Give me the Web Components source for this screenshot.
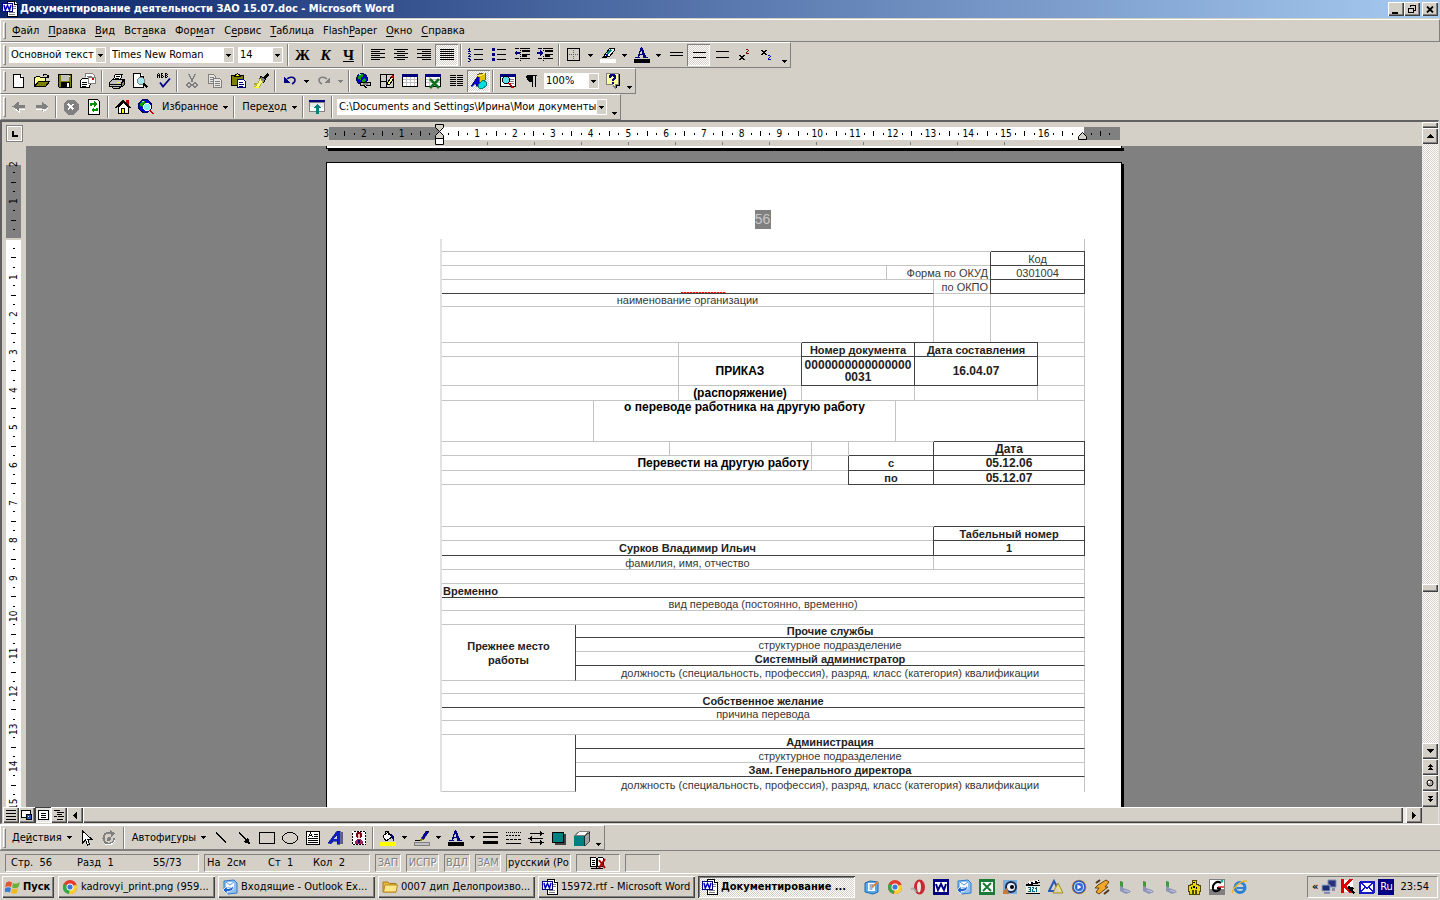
<!DOCTYPE html>
<html lang="ru">
<head>
<meta charset="utf-8">
<title>Документирование деятельности ЗАО 15.07.doc - Microsoft Word</title>
<style>
html,body{margin:0;height:100%}
body{font:11px/14px "DejaVu Sans Condensed","DejaVu Sans",sans-serif;color:#000;background:#d4d0c8;overflow:hidden}
</style>
</head>
<body>
<word-app></word-app>
<script>
const BASE = `
*{box-sizing:border-box}
button{font:inherit;color:inherit;background:none;border:0;padding:0;margin:0;white-space:nowrap}
svg{display:block;flex:none}
.raised{background:#d4d0c8;box-shadow:inset 1px 1px #fff,inset -1px -1px #404040,inset -2px -2px #808080}
`;
function define(name, render) {
  customElements.define(name, class extends HTMLElement {
    constructor() { super(); this.attachShadow({ mode: 'open' }); }
    connectedCallback() { this.shadowRoot.innerHTML = '<style>' + BASE + '</style>' + render(this); }
  });
}

/* ---------- icons ---------- */
const K = '#000', N = '#000080', G = '#808080', W = '#fff', T = '#008080', Y = '#ffff00', O = '#808000', S = '#c0c0c0';
const r = (x, y, w, h, c) => `<rect x="${x}" y="${y}" width="${w}" height="${h}" fill="${c}"/>`;
const p = (d, f = 'none', s = 'none', w = 1) => `<path d="${d}" fill="${f}" stroke="${s}" stroke-width="${w}"/>`;
const c = (x, y, q, f, s = 'none', w = 1) => `<circle cx="${x}" cy="${y}" r="${q}" fill="${f}" stroke="${s}" stroke-width="${w}"/>`;
const rows = (list, col = K) => list.map(([x, y, w]) => r(x, y, w, 1, col)).join('');
const soft = s => `<g shape-rendering="auto">${s}</g>`;
const map = (lines, pal, ox = 0, oy = 0) => lines.map((l, y) => [...l].map((ch, x) => pal[ch] ? r(x + ox, y + oy, 1, 1, pal[ch]) : '').join('')).join('');
const wordMark = p('M5.5 .5h7l3 3v12h-10z', W, K) + p('M12.5 .5v3h3', W, K) + r(7, 11, 6, 1, G) + r(7, 13, 6, 1, G) + r(11, 5, 3, 1, G) + r(11, 7, 3, 1, G) + r(0, 2, 11, 9, N) + r(1, 3, 9, 7, W) + soft(p('M2 4l1.3 5L5.500 4.500l2 4.500L9 4', 'none', '#0000c0', 1.500));
const globe = (x, y, q) => c(x, y, q, '#0000d0', '#000060') + p(`M${x - q + 1} ${y - 1}l2-3 3-1 1 2-3 2v2zM${x} ${y + 1}l3-2 1 2-2 3-2 0z`, '#00a000') + p(`M${x - 3} ${y - 4}l2-1`, 'none', '#a0e8ff');
const digits = map(['.n.', 'nn.', '.n.', 'nnn', '...', 'nn.', '..n', '.n.', 'nnn', '...', 'nn.', '.nn', '..n', 'nn.'], { n: N }, 0, 1);
const leg = soft(p('M3 2l3 1v6l6 2 2 2-5 2-6-3z', '#8f94b8') + p('M3 2l3 1v5l-3-1z', '#3f9a3a') + p('M7 11l5 1v1l-5-1z', '#c6c9de'));
const chrome = soft(c(8, 8, 7, '#e33b2e') + p('M8 8L1.800 4.800A7 7 0 0 0 7 15z', '#3aa64a') + p('M8 8l6.500-2.500A7 7 0 0 1 7 15z', '#f8d030') + c(8, 8, 3.500, W) + c(8, 8, 2.600, '#3a78d8'));
const outlook = soft(p('M2 2l10-1 3 3v10l-9 1-4-3z', '#8fc0f4', '#2f77c8') + p('M4 3h8v5H4z', '#f4faff') + p('M4 3l4 3 4-3', 'none', '#5a98d8') + p('M1 11l4-4v2.500c4 0 5-1 6-3 1 4-1 6-6 6V15z', '#1f62cc', '#fff', .8));
const ICONS = {
  word: wordMark,
  alignL: rows([[1, 2, 14], [1, 4, 9], [1, 6, 14], [1, 8, 9], [1, 10, 14], [1, 12, 9]]),
  alignC: rows([[1, 2, 14], [4, 4, 8], [1, 6, 14], [4, 8, 8], [1, 10, 14], [4, 12, 8]]),
  alignR: rows([[1, 2, 14], [6, 4, 9], [1, 6, 14], [6, 8, 9], [1, 10, 14], [6, 12, 9]]),
  alignJ: rows([[1, 2, 14], [1, 4, 14], [1, 6, 14], [1, 8, 14], [1, 10, 14], [1, 12, 14]]),
  numList: digits + rows([[6, 2, 9], [6, 7, 9], [6, 12, 9]]),
  bulList: r(1, 1, 3, 3, N) + r(1, 6, 3, 3, N) + r(1, 11, 3, 3, N) + rows([[6, 2, 9], [6, 7, 9], [6, 12, 9]]),
  outdent: rows([[1, 1, 4], [7, 1, 9], [8, 7, 8], [1, 11, 4], [7, 11, 9]]) + r(8, 3, 8, 2, K) + r(8, 8, 5, 2, K) + r(6, 1, 1, 1, K) + r(6, 3, 1, 1, K) + r(6, 5, 1, 1, K) + r(6, 7, 1, 1, K) + r(6, 9, 1, 1, K) + r(6, 11, 1, 1, K) + r(6, 13, 1, 1, K) + p('M0 6l3-3v2h3v2H3v2z', N),
  indent: rows([[1, 1, 4], [7, 1, 9], [8, 7, 8], [1, 11, 4], [7, 11, 9]]) + r(8, 3, 8, 2, K) + r(8, 8, 5, 2, K) + r(6, 1, 1, 1, K) + r(6, 3, 1, 1, K) + r(6, 9, 1, 1, K) + r(6, 11, 1, 1, K) + r(6, 13, 1, 1, K) + p('M6 6L3 3v2H0v2h3v2z', N),
  border: p('M1.500 1.500h12v12h-12z', 'none', K) + `<path d="M7.500 3v10M3 7.500h10" stroke="#606060" stroke-dasharray="1 1"/>`,
  marker: p('M4 9l5-7 2-1h3v3l-5 6z', W, K) + p('M7 7l4-4', 'none', T, 2) + r(6, 7, 2, 2, '#0000c0') + p('M1 11l3-3 3 2-1 1z', K) + r(0, 12, 16, 4, W),
  fontColor: p('M3 11L7 0h1l5 11h-3l-1-3H6l-1 3zM6 7h2.500L7.200 3z', N) + r(1, 10, 5, 1, N) + r(9, 10, 5, 1, N) + r(0, 12, 16, 4, K),
  sp1: rows([[2, 5, 13], [2, 8, 13]]),
  sp15: rows([[2, 5, 13], [2, 10, 13]]),
  sp2: rows([[2, 4, 13], [2, 10, 13]]),
  sup: map(['kk..kk', '.kkkk.', '..kk..', '.kkkk.', 'kk..kk'], { k: K }, 2, 8) + map(['nn.', '..n', '.n.', 'n..', 'nnn'], { n: '#800000' }, 9, 2),
  sub: map(['kk..kk', '.kkkk.', '..kk..', '.kkkk.', 'kk..kk'], { k: K }, 1, 3) + map(['nn.', '..n', '.n.', 'n..', 'nnn'], { n: '#0000c0' }, 8, 8),
  newDoc: p('M2.500 1.500h7l3 3v10h-10z', W, K) + p('M9.500 1.500v3h3', W, K),
  open: p('M.5 12.500v-8h1l1-1h3l1 1h5v3', '#ffff90', K) + p('M.5 13.500l4-5h11l-4 5z', O, K) + p('M9 2.500c2-2 4-1 5 1m0-2v3h-3', 'none', K),
  save: p('M1.500 1.500h13v13h-12l-1-1z', O, K) + r(4, 2, 8, 6, S) + r(4, 9, 9, 5, K) + r(10, 10, 2, 4, W) + r(12, 3, 1, 1, W),
  mail: p('M5.500 4V.5h7l2 2v7h-3', W, G) + rows([[7, 3, 5], [7, 5, 5]], G) + p('M.5 7.500l2-2h9v5l-2 2v2h-9z', W, K) + p('M8.500 4.500h7v6h-7z', W, G) + r(12, 5, 2, 2, '#e00000') + rows([[2, 9, 5], [2, 11, 5], [2, 13, 4]], K),
  print: p('M4.500 6l2-5h7l-2 5', W, K) + rows([[7, 3, 4], [6, 5, 4]], K) + p('M.5 9.500l3-3h11l-2 4v3h-12z', S, K) + p('M12.500 10.500l3-4v5l-3 3', G, K) + r(1, 11, 11, 1, K) + r(8, 9, 3, 1, Y) + p('M2.500 13.500h9l-1 2h-6z', S, K),
  preview: p('M1.500 .5h7l3 3v11h-10z', W, K) + p('M8.500 .5v3h3', W, K) + c(9, 8, 3.500, '#a0e8f0', G) + p('M11.500 10.500l4 4', 'none', K, 2),
  spell: map(['.k..kk..kk.', 'k.k.k...k.k', 'kkk.kk..kk.', 'k.k.k.k.k.k', 'k.k.kk..kk.'], { k: K }, 2, 0) + soft(p('M5 9.500l3 4 7-8', 'none', N, 1.800)),
  cut: p('M5 1l3.500 8M11 1L7.500 9', 'none', G, 1.500) + c(5, 12, 2, 'none', G, 1.500) + c(11, 12, 2, 'none', G, 1.500),
  copy: p('M1.500 1.500h5l2 2v7h-7z', '#e8e6e0', G) + rows([[3, 4, 4], [3, 6, 4], [3, 8, 4]], G) + p('M6.500 5.500h6l2 2v7h-8z', '#e8e6e0', G) + rows([[8, 8, 5], [8, 10, 5], [8, 12, 5]], G),
  paste: p('M1.500 2.500h12v10h-12z', O, K) + p('M4.500 3.500l1-2h1l1-1 1 1h1l1 2z', Y, K) + p('M7.500 6.500h6l2 2v6h-8z', W, N) + rows([[9, 9, 4], [9, 11, 5], [9, 13, 4]], N),
  brush: p('M11 4l3-4 2 2-4 4z', K) + p('M10.500 4.500l-3-1 -1 3 4 3 2-3z', G, K) + p('M7 5l3 4-5 6-4-1 3-2-3-1 4-1z', '#ffff80', O, .6) + r(1, 14, 5, 1, Y),
  undo: soft(p('M5 6c3-3 8-2 8 1 0 2-1 3-3 4', 'none', N, 1.500)) + p('M2 4v6h6z', N),
  redo: soft(p('M11 6C8 3 3 4 3 7c0 2 1 3 3 4', 'none', G, 1.500)) + p('M14 4v6H8z', G),
  link: globe(6, 6, 5.500) + p('M4.500 9.500h4v3h-4zM10.500 9.500h4v3h-4z', S, K, 1.500) + r(7, 10, 5, 2, G) + p('M8 13l3 2', 'none', K),
  tables: p('M1.500 1.500h13v13h-13zM7.500 1.500v13M1.500 8.500h6', 'none', K) + p('M8 12l1-3 4-6 2 2-4 6z', '#ffff80', K) + p('M13 3l2 2', 'none', '#c00000', 1.500),
  table: r(0, 1, 16, 13, K) + r(0, 1, 16, 3, N) + r(1, 4, 14, 9, W) + rows([[1, 6, 14], [1, 9, 14]], S) + r(4, 4, 1, 9, S) + r(8, 4, 1, 9, S) + r(12, 4, 1, 9, S),
  excel: r(0, 1, 16, 13, K) + r(0, 1, 16, 3, N) + r(1, 4, 14, 9, W) + rows([[1, 6, 14], [1, 9, 14]], S) + r(4, 4, 1, 9, S) + soft(p('M5 6l9 9M14 6l-9 9', 'none', '#107020', 2.500)),
  cols: [2, 4, 6, 8, 10, 12].map(y => r(2, y, 6, 1, K) + r(9, y, 6, 1, K)).join(''),
  draw: p('M6 2l3-2h5v7l-2 2H6z', '#e0c000', K, .6) + p('M6 2h5l3-2', 'none', '#fff080') + p('M0 13L6 4h2v9H5l0-2H3l-1 2z', '#0000d0', '#000060', .5) + p('M7 12l5-5 3 2v4l-4 3-3-1z', '#00e0e0', T),
  docmap: r(0, 1, 16, 13, K) + r(0, 1, 16, 3, N) + r(1, 4, 14, 9, W) + rows([[9, 6, 5], [10, 8, 4], [10, 10, 4]], G) + c(6, 7, 3.500, '#60e0e8', K) + p('M9 10l4 5', 'none', '#c00000', 2),
  para: p('M4 2h10v1h-1v11h-1V3h-2v11H9V9H6L4 7V6L3 4z', K),
  help: p('M1.500 .5h12v11h-3v4l-3-4h-6z', '#ffffa0', G) + p('M14.500 1v11h-3v3', 'none', K) + p('M5 4.500V3h1V2h3v1h1v2L8 6.500V8', 'none', N, 2) + r(7, 9, 2, 2, N),
  back: p('M1.500 7.500l6-5v3.500h6v3h-6v3.500z', G) + p('M3 9l5 4v-3h6', 'none', W),
  fwd: p('M14 7.500l-6-5v3.500H2v3h6v3.500z', G) + p('M14 9l-5 4v-3H2', 'none', W),
  stop: p('M5 .5h6l4.500 4.500v6L11 15.500H5L.5 11V5z', G) + p('M5 5l5.500 5.500M10.500 5L5 10.500', 'none', W, 2),
  refresh: p('M2.500 .5h9l2 2v13h-11z', W, K) + p('M5 7V5h4', 'none', '#009000', 1.500) + p('M8 2l3 3-3 3z', '#009000') + p('M11 8.500v2.500H7', 'none', '#009000', 1.500) + p('M8 8l-3 3 3 3z', '#009000'),
  home: r(11, 1, 3, 5, '#c00000') + p('M3.500 8v6.500h10V8l-5-5z', W, K) + p('M.5 9L8 1.500 15.500 9', 'none', K, 1.500) + r(6, 9, 4, 5, Y) + p('M6.500 14V9.500h3V14', 'none', K),
  search: globe(7, 7, 6.500) + c(9, 8, 3.500, '#80f0ff', W) + p('M11.500 11l4 4', 'none', '#d00000', 2),
  barsTop: r(0, 1, 16, 3, N) + p('M.5 3.500h15v9h-15z', W, G) + r(1, 4, 14, 4, '#e8e8e8') + p('M8 5l4 4H9.500v6h-3V9H4z', T),
  pick: p('M4.500 1v12l3-3 2 5 2-1-2-5h4z', W, K),
  rotate: p('M11 3.500A5.500 5.500 0 1 0 13.500 8', 'none', G, 2) + p('M9 0l5 3-4 4z', G) + c(8, 9, 2, G) + p('M4 14c4 2 9 0 10-4', 'none', W),
  line: p('M3 2.500l10 10', 'none', K),
  arrow: p('M3 2.500l8 8', 'none', K) + p('M14 14l-2-7-5 5z', K),
  rect: p('M.5 2.500h15v11h-15z', 'none', K),
  oval: `<ellipse cx="8" cy="8" rx="7.500" ry="5.500" fill="none" stroke="#000"/>`,
  textbox: r(1, 1, 14, 14, K) + r(2, 2, 12, 12, W) + p('M3.500 7l2-4 2 4M4 5.500h3', 'none', K) + rows([[9, 4, 4], [9, 6, 4], [3, 8, 10], [3, 10, 10], [3, 12, 10]]),
  wordart: p('M0 13L9 1h3v13H9v-3H5l-2 3z', '#1020c8', '#000060', .5) + p('M6 9h3V5z', '#d4d0c8') + r(13, 2, 2, 12, '#606080'),
  clip: p('M1.500 1.500h13v13h-13z', W, K) + `<path d="M1.500 1.500h13v13h-13z" fill="none" stroke="#fff" stroke-dasharray="1 2"/>` + c(8, 5, 3, '#800020') + r(7, 4, 2, 4, '#f0c090') + p('M4 14c0-7 8-7 8 0z', '#a02060') + r(7, 10, 2, 3, N),
  fill: p('M3 6l5-4 4 5-6 4z', W, K) + p('M5 5V1h3v4', 'none', K) + p('M11 4c4 1 3 5 3 7-2-1-1-3-3-4z', N) + r(0, 12, 16, 4, Y),
  pen: p('M7 9l5-8 3 0-1 2-5 7z', '#0000c0', K, .6) + p('M5 10l3-2 1 2-3 1z', O) + r(1, 10, 5, 1, K) + p('M.5 12.500h15v3H.5z', S, G),
  weights: r(1, 2, 15, 1, K) + r(1, 6, 15, 2, K) + r(1, 11, 15, 3, K),
  dashes: `<path d="M1 2.500h15" stroke="#000" stroke-dasharray="1 1"/><path d="M1 5.500h15" stroke="#000" stroke-dasharray="2 1"/><path d="M1 9.500h15" stroke="#000" stroke-dasharray="3 1"/>` + r(1, 13, 15, 1, K),
  arrows: r(2, 3, 12, 1, K) + r(2, 8, 13, 1, K) + r(2, 12, 13, 1, K) + p('M12 1l4 2.500-4 2.500zM4 6L0 8.500l4 2.500zM12 10l4 2.500-4 2.500z', K),
  shadow: r(4, 4, 11, 11, '#404040') + r(1, 2, 11, 10, T) + p('M1.500 2.500h11v10h-11z', 'none', K),
  cube: p('M.5 5.500h10v10H.5z', T, T) + p('M.5 5.500l5-4h10l-5 4z', W, G) + p('M10.500 5.500l5-4v9l-5 5z', '#a0a0a0', K, .6),
  start: soft(p('M1 4c2-2 4-2 6-.5L6 8c-2-1-4-1-6 .5z', '#e8542c') + p('M8 4c2 1 4 1 7-1l-1.500 5c-2 1.500-4 1.500-6.500 .5z', '#6cb03a') + p('M0 9.500C2 8 4 8 6 9l-1 4.500c-2-1-4-1-6 .5z', '#3d78d8') + p('M7 9.500c2 1 4 1 6-.5l-1 4.500c-2 1.500-4 1.500-6 .5z', '#f2b820')),
  chrome, outlook,
  folder: soft(p('M1 3h5l1.500 1.500H14V13H1z', '#e8b83a', '#a87818') + p('M1.500 13l1.500-7h12.500L14 13z', '#ffe68a', '#b88a20')),
  editNote: soft(p('M1 4l5-2 8 1v10l-5 2-8-2z', '#58a8e8', '#1868b8') + p('M4 4h7v8H4z', W) + p('M5.500 6h4M5.500 8h4M5.500 10h3', 'none', '#2878c8') + p('M8 8l6-5', 'none', '#e88030', 2)),
  opera: soft(`<ellipse cx="9.500" cy="8" rx="5.500" ry="7.500" fill="#c82830"/><ellipse cx="9" cy="8" rx="2" ry="5.500" fill="#e8e4e0"/>` + p('M1 10c2-1 4 0 5 3', 'none', '#a8a8a8', 2)),
  wordSq: r(0, 0, 16, 16, N) + r(2, 3, 12, 10, W) + soft(p('M3 5l2 6 3-6 3 6 2-6', 'none', N, 2)),
  excelSq: r(0, 0, 16, 16, '#1c7a34') + r(2, 3, 12, 10, W) + soft(p('M4 4l8 8M12 4l-8 8', 'none', '#1c7a34', 2)),
  eye: soft(r(1, 1, 14, 14, '#7ab0e0') + c(9, 8, 6, '#1c2c50') + c(9, 8, 4, '#e8eef8') + c(10, 8, 2, K) + p('M1 12l4-3 2 6H1z', '#c87838')),
  clap: r(1, 6, 14, 9, '#e8f0e0') + r(1, 6, 14, 1, K) + r(1, 14, 14, 1, K) + p('M1 5l13-4 1 3-13 3z', K) + p('M4 3l2 2M8 2l2 2M12 1l1 2', 'none', W, 1.500) + map(['nnn.nn..n', '..n..n.nn', '.nn.n...n', '..n.n...n', 'nnn.nnn.n'], { n: '#106080' }, 3, 8),
  tri: soft(p('M6 2L1 12h10z', 'none', '#2858b8', 2) + p('M10 4l5 10H5z', '#f0e070', '#988830') + p('M9 8l3 5H6z', '#d4d0c8')),
  media: soft(c(8, 8, 7.300, '#e89030') + c(8, 8, 6, '#b8d8f8', '#2858b8', 1.500) + c(8, 8, 4, '#3068d0') + p('M6.500 5.500l4 2.500-4 2.500z', W)),
  bolt: soft(p('M4 6l8-5 3 2-4 5 3 0-9 7-3-2 3-4-4 0z', '#f0a828', '#684010') + p('M2 4l4-3M10 15l5-4', 'none', '#503818', 2)),
  leg,
  robot: p('M6 1h4v4h2v1h2v6h-1v3h-3v-4H9v4H7v-4H6v4H3v-3H2V6h2V5h2z', '#e8d800', '#504800') + r(7, 3, 2, 1, K) + r(5, 8, 1, 2, K) + r(10, 8, 1, 2, K) + r(7, 7, 2, 2, K),
  gsq: p('M.5 .5h15v15H.5z', W, G) + r(1, 10, 14, 5, G) + soft(p('M12 4c-4-3-9 1-8 6 1 4 7 2 7-1H8', 'none', K, 2) + p('M9 8h6', 'none', '#e02020', 1.500) + c(13, 2, 1.500, '#10b0a0')),
  ie: soft(c(8, 8.500, 5, 'none', '#2a80d8', 3) + r(5, 8, 8, 2, '#2a80d8') + p('M1 14C-1 11 8 1 15 2', 'none', '#f0b820', 1.500)),
  net: soft(p('M7 1h8v7H7z', '#26347c', '#8890b8') + p('M1 6h8v6H1z', '#1c2c70', '#a0a8c8') + r(3, 13, 6, 2, '#888cb0') + r(11, 9, 3, 3, '#888cb0')),
  kav: r(1, 1, 12, 12, W) + p('M1 0h3v6l5-6h4L7 7l6 7H9L4 8v6H1z', '#e00000') + p('M8 7l6 2-1 2 2 3-2 1-2-3-2 1z', K),
  env: `<rect x="0" y="2" width="16" height="13" rx="2" fill="#1818c8"/>` + r(2, 4, 12, 9, W) + p('M2 4l6 5 6-5M2 13l4-5M14 13l-4-5', 'none', '#1818c8', 1.500),
  book: p('M0.500 2.500h5l1 1v9l-1 -1h-5zM7.500 3.500l1-1h4l1 1v8h-6z', W, K) + rows([[2, 5, 3], [2, 7, 3], [2, 9, 3]]) + r(1, 13, 12, 1, K) + soft(p('M9 5l6 8M15 4l-6 9', 'none', '#b00000', 2)),
  viewN: rows([[3, 3, 10], [3, 6, 10], [3, 9, 10], [3, 12, 10]]),
  viewW: p('M2.500 3.500h9v7h-9z', W, K) + c(10, 10, 3, '#2050c0', K) + r(9, 9, 1, 1, W),
  viewP: p('M3.500 3.500h10v9h-10z', W, K) + rows([[6, 6, 5], [6, 8, 5], [6, 10, 5]]),
  viewO: rows([[3, 3, 6], [6, 5, 7], [6, 7, 5], [3, 9, 3], [7, 9, 6], [6, 12, 6]]),
};
define('win-icon', el => `<style>:host{display:block;width:16px;height:16px;flex:none}</style>
<svg width="16" height="16" viewBox="0 0 16 16" shape-rendering="crispEdges" aria-hidden="true">${ICONS[el.getAttribute('name')] || ''}</svg>`);
const ico = n => `<win-icon name="${n}"></win-icon>`;
const tri = `<svg width="5" height="3" viewBox="0 0 5 3" shape-rendering="crispEdges"><path d="M0 0h5v1H4v1H3v1H2V2H1V1H0z"/></svg>`;

/* ---------- toolbars ---------- */
define('tool-bar', () => `<style>
:host{display:flex;align-items:center;align-self:flex-start;height:26px;border:1px solid;border-color:#fff #808080 #808080 #fff}
.grip{width:3px;height:20px;margin:0 1px 0 2px;background:#d4d0c8;border:1px solid;border-color:#fff #808080 #808080 #fff}
</style><span class="grip"></span><slot></slot>`);
define('tool-sep', () => `<style>:host{display:block;width:2px;height:22px;margin:0 2px;border-left:1px solid #808080;border-right:1px solid #fff}</style>`);
define('tool-button', el => {
  const icon = el.getAttribute('icon'), text = el.hasAttribute('text');
  return `<style>
:host{display:block;flex:none}
button{display:flex;align-items:center;justify-content:center;width:23px;height:22px}
button.text{width:auto;padding:0 3px 0 5px;gap:5px}
button.glyph{font:bold 15px/16px "Liberation Serif",serif}
button.on{background:repeating-conic-gradient(#fff 0 25%,#d4d0c8 0 50%) 0 0/2px 2px;box-shadow:inset 1px 1px #808080,inset -1px -1px #fff}
u{text-underline-offset:2px}
</style><button type="button" class="${text ? 'text' : ''} ${el.hasAttribute('glyph') ? 'glyph' : ''} ${el.hasAttribute('on') ? 'on' : ''}" aria-label="${el.getAttribute('label') || ''}">${icon ? ico(icon) : '<span><slot></slot></span>'}${text ? tri : ''}</button>`;
});
define('tool-arrow', el => `<style>:host{display:block;flex:none}button{display:grid;place-items:center;width:11px;height:22px}
:host([end]) button{place-items:end center;padding-bottom:3px}:host([dim]) svg{fill:#808080}</style>
<button type="button" aria-label="Ещё">${tri}</button>`);
define('tool-combo', el => `<style>
:host{display:grid;margin:0 2px;height:16px;background:#fff}
select{grid-area:1/1;width:100%;height:16px;font:inherit;line-height:16px;appearance:none;border:0;background:none;padding:0 0 0 2px;margin:0;color:#000;outline:0;border-radius:0}
span{grid-area:1/1;justify-self:end;display:grid;place-items:center;width:9px;height:14px;margin:1px;background:#d4d0c8;pointer-events:none}
</style><select aria-label="${el.getAttribute('label')}"><option>${el.getAttribute('value')}</option></select><span>${tri}</span>`);
const B = (icon, label, on) => `<tool-button icon="${icon}" label="${label}" ${on ? 'on' : ''}></tool-button>`;
const A = '<tool-arrow></tool-arrow>', E = '<tool-arrow end></tool-arrow>', SEP = '<tool-sep></tool-sep>';

define('title-bar', () => `<style>
:host{display:flex;align-items:center;height:18px;padding:0 2px;gap:2px;background:linear-gradient(90deg,#0a246a,#a6caf0);color:#fff;font-weight:bold;margin-bottom:1px}
h1{font:inherit;margin:0;flex:1;white-space:nowrap;overflow:hidden}
.box{display:flex}
button{width:16px;height:14px;display:grid;place-items:center}
</style>${ico('word')}<h1>Документирование деятельности ЗАО 15.07.doc - Microsoft Word</h1>
<span class="box"><button class="raised" aria-label="Свернуть"><svg width="10" height="9" shape-rendering="crispEdges">${r(1, 7, 6, 2, K)}</svg></button>
<button class="raised" aria-label="Восстановить"><svg width="10" height="10" shape-rendering="crispEdges">${p('M3.500 3V1.500h5v5H7M3 1h6', 'none', K)}${p('M1.500 4.500h5v4h-5zM1 4h6', 'none', K)}</svg></button></span>
<button class="raised" aria-label="Закрыть"><svg width="8" height="7">${p('M1 .5l6 6M7 .5l-6 6', 'none', K, 1.800)}</svg></button>`);

define('menu-bar', () => `<style>
:host{display:flex;align-items:center;height:23px;border:1px solid;border-color:#fff #808080 #808080 #fff}
.grip{width:3px;height:17px;margin:0 6px 0 2px;border:1px solid;border-color:#fff #808080 #808080 #fff}
nav{display:flex;gap:9px;padding-top:1px}
u{text-underline-offset:2px}
</style><span class="grip"></span><nav>${['<u>Ф</u>айл', '<u>П</u>равка', '<u>В</u>ид', 'Вст<u>а</u>вка', 'Фор<u>м</u>ат', 'С<u>е</u>рвис', '<u>Т</u>аблица', 'Flash<u>P</u>aper', '<u>О</u>кно', '<u>С</u>правка'].map(t => `<button type="button">${t}</button>`).join('')}</nav>`);

/* ---------- rulers ---------- */
define('h-ruler', () => {
  let cells = '';
  for (let n = -3; n <= 18; n++) {
    const num = n === 0 || n > 16 ? '' : Math.abs(n);
    cells += `<i class="${n > -3 ? 'bar' : ''}"></i><i class="${n > -3 ? 'dot' : ''}"></i><b>${num}</b><i class="${n < 18 ? 'dot' : ''}"></i>`;
  }
  let tabs = ''; for (let n = 0; n < 12; n++) tabs += '<i></i>';
  return `<style>
:host{display:flex;height:24px;background:#d4d0c8;align-items:flex-start}
.tab{width:17px;height:17px;margin:3px 4px;border:1px solid #808080;outline:1px solid #fff;outline-offset:-2px;display:grid;place-items:center}
.mid{flex:1;display:flex;justify-content:center}
.band{position:relative;flex:none;width:796px;height:24px}
.bg{display:flex;height:13px;margin:5px 3px 0 2px;background:#808080}
.bg::before{content:"";margin-left:111px;width:644px;background:#fff}
.scale{position:absolute;left:-24px;top:5px;width:831px;height:13px;display:grid;grid-template-columns:repeat(88,1fr);align-items:center;font-size:10px;line-height:13px}
.scale>*{display:flex;justify-content:center;justify-self:center}
b{font-weight:normal;width:0}
.bar{width:1px;height:5px;background:#000}.dot{width:1px;height:2px;background:#000}
.tabs{display:grid;grid-template-columns:repeat(12,1fr);width:564px;margin-left:160px;padding-top:1px}
.tabs i{width:1px;height:3px;background:#808080;margin-top:1px}
.ind{position:absolute;top:2px;left:108px}.rind{position:absolute;top:10px;left:751px}
</style><span class="tab"><svg width="6" height="6" shape-rendering="crispEdges">${r(0, 0, 2, 6, K)}${r(0, 4, 6, 2, K)}</svg></span>
<div class="mid"><div class="band"><div class="bg"></div><div class="scale">${cells}</div><div class="tabs">${tabs}</div>
<svg class="ind" width="9" height="22">${p('M.5 .5h8v3l-4 4-4-4zM.5 14.500v-3l4-4 4 4v3z', '#d4d0c8', K)}${p('M.5 14.500h8v6h-8z', W, K)}</svg>
<svg class="rind" width="9" height="8">${p('M.5 7.500v-3l4-4 4 4v3z', '#d4d0c8', K)}</svg></div></div>`;
});
define('v-ruler', () => {
  let cells = '';
  for (let n = -2; n <= 15; n++) cells += `<i class="bar"></i><i class="dot"></i><b>${n ? Math.abs(n) : ''}</b><i class="dot"></i>`;
  return `<style>
:host{display:block;width:24px;flex:none;background:#d4d0c8;overflow:hidden;position:relative}
.bg{position:absolute;top:19px;bottom:0;left:4px;width:15px;background:#fff;border-top:73px solid #808080}
.bg::before{content:"";display:block;height:2px;background:#d4d0c8}
.scale{position:relative;margin:-6px 5px 0 4px;height:678px;display:grid;grid-template-rows:repeat(72,1fr);justify-items:center;align-items:center;font-size:10px;line-height:15px}
b{font-weight:normal;height:0;writing-mode:vertical-rl;transform:rotate(180deg);display:flex;justify-content:center}
.bar{width:5px;height:1px;background:#000}.dot{width:2px;height:1px;background:#000}
.bar:first-child,.bar:first-child+.dot{visibility:hidden}
</style><div class="bg"></div><div class="scale">${cells}</div>`;
});

/* ---------- the order form ---------- */
const JOB = 'должность (специальность, профессия), разряд, класс (категория) квалификации';
const COLS = [134, 18, 76, 9, 123, 10, 37, 38, 9, 19, 19, 57, 47, 47];
const FORM = [
  [13, [12, '', 'nr'], [2, '', 'nr']],
  [14, [12], [2, 'Код', 'T L R B']],
  [14, [8], [4, 'Форма по ОКУД', 'right'], [2, '0301004', 'L R B']],
  [14, [11, '<mark></mark>', 'B base'], [1, 'по ОКПО', 'right'], [2, '', 'L R B']],
  [13, [11, 'наименование организации'], [1], [2]],
  [36, [11], [1], [2]],
  [14, [4], [1], [5, 'Номер документа', 'T L R B m'], [3, 'Дата составления', 'T R B m'], [1]],
  [29, [4], [1, 'ПРИКАЗ', 'h'], [5, '0000000000000000<br>0031', 'L R B d'], [3, '16.04.07', 'R B d'], [1]],
  [15, [4], [1, '(распоряжение)', 'h'], [5], [3], [1]],
  [41, [2], [7, 'о переводе работника на другую работу', 'h top'], [5]],
  [14, [3], [3], [1], [4], [3, 'Дата', 'T L R B d']],
  [15, [6, 'Перевести на другую работу', 'h right'], [1], [4, 'с', 'T L R B m'], [3, '05.12.06', 'R B d']],
  [14, [7], [4, 'по', 'L R B m'], [3, '05.12.07', 'R B d']],
  [42, [14]],
  [14, [11], [3, 'Табельный номер', 'T L R B m']],
  [15, [11, 'Сурков Владимир Ильич', 'B m'], [3, '1', 'L R B m']],
  [14, [11, 'фамилия, имя, отчество'], [3]],
  [14, [14]],
  [14, [14, 'Временно', 'B m left']],
  [13, [14, 'вид перевода (постоянно, временно)']],
  [14, [14]],
  [13, [1, 'Прежнее место работы', 'R m', 4], [13, 'Прочие службы', 'B m']],
  [14, [13, 'структурное подразделение']],
  [14, [13, 'Системный администратор', 'B m']],
  [15, [13, JOB]],
  [13, [14]],
  [14, [14, 'Собственное желание', 'B m']],
  [13, [14, 'причина перевода']],
  [14, [14]],
  [14, [1, '', 'R', 4], [13, 'Администрация', 'B m']],
  [14, [13, 'структурное подразделение']],
  [14, [13, 'Зам. Генерального директора', 'B m']],
  [15, [13, JOB, 'nb']],
];
define('order-form', () => `<style>
:host{display:block}
table{width:100%;table-layout:fixed;border-collapse:separate;border-spacing:0;border-left:2px solid #e2e2e2;font:11px/12px "Liberation Sans",Arial,sans-serif;color:#383838}
td{padding:0;border:solid #c4c4c4;border-width:0 1px 1px 0;text-align:center;white-space:nowrap;
  --t:0 0 #0000;--l:0 0 #0000;box-shadow:var(--t),var(--l)}
td[rowspan]{white-space:normal;padding:0 20px;line-height:14px}
.T{--t:0 -1px #404040}.L{--l:-1px 0 #404040}.R{border-right-color:#404040}.B{border-bottom-color:#404040}
.nr{border-right-color:#fff}.nr:last-child{border-right-color:#c4c4c4}.nb{border-bottom:0}
.right{text-align:right;padding-right:2px}
.left{text-align:left;padding-left:1px}.top{vertical-align:top}.base{vertical-align:bottom}
.m{font-weight:bold;color:#222}.d,.h{font-size:12px;font-weight:bold;color:#222}.h{color:#000}
mark{display:block;width:45px;height:1px;margin:0 0 0 239px;background:repeating-linear-gradient(90deg,#f00 0 2px,#f99 2px 3px)}
</style><table><colgroup>${COLS.map(w => `<col style="width:${w}px">`).join('')}</colgroup><tbody>${FORM.map(([h, ...cells]) =>
  `<tr style="height:${h}px">${cells.map(([s, t = '', k = '', rs = 1]) => `<td${s > 1 ? ` colspan="${s}"` : ''}${rs > 1 ? ` rowspan="${rs}"` : ''} class="${k}" style="${rs > 1 ? '' : `height:${h}px`}">${t}</td>`).join('')}</tr>`).join('')}</tbody></table>`);
define('doc-canvas', () => `<style>
:host{display:flex;flex-direction:column;align-items:center;flex:1;min-width:0;background:#808080;overflow:hidden}
.sheet{flex:none;width:796px;background:#fff;border:1px solid #000;box-shadow:2px 2px #000}
.prev{height:3px;border-top:0;margin-bottom:13px}
.page{height:1123px;padding:47px 36px 0 113px}
header{width:16px;height:19px;margin:0 auto 10px;background:#808080;color:#c8c8c8;font:14px/19px "Liberation Sans",Arial,sans-serif;text-align:center}
</style><div class="sheet prev"></div><article class="sheet page"><header>56</header><order-form></order-form></article>`);

/* ---------- scroll bars ---------- */
const arr = (d, w = 7, h = 7) => `<svg width="${w}" height="${h}" shape-rendering="crispEdges"><path d="${d}"/></svg>`;
const UP = 'M3 0h1v1h1v1h1v1h1v1H0V3h1V2h1V1h1z', DOWN = 'M0 0h7v1H6v1H5v1H4v1H3V3H2V2H1V1H0z';
define('v-scroll', () => `<style>
:host{display:flex;flex-direction:column;width:16px;flex:none;padding-bottom:16px}
button,.split,.thumb{display:grid;place-items:center;height:16px;flex:none}
.split{height:6px}.thumb{height:8px}
.t{background:repeating-conic-gradient(#fff 0 25%,#d4d0c8 0 50%) 0 0/2px 2px}
</style><span class="split raised"></span><button class="raised" aria-label="Вверх">${arr(UP, 7, 4)}</button>
<span class="t" style="flex:440"></span><span class="thumb raised"></span><span class="t" style="flex:151"></span>
<button class="raised" aria-label="Вниз">${arr(DOWN, 7, 4)}</button>
<button class="raised" aria-label="Предыдущая страница">${arr('M2 0h1v1h1v1h1v1H3v1h1v1h1v1H0V5h1V4h1V3H0V2h1V1h1z', 5, 6)}</button>
<button class="raised" aria-label="Выбор объекта перехода"><svg width="8" height="8">${c(4, 4, 3, '#b0aca4', K)}${r(2, 2, 2, 2, W)}</svg></button>
<button class="raised" aria-label="Следующая страница">${arr('M0 0h5v1H4v1H3v1h2v1H4v1H3v1H2V5H1V4H0V3h2V2H1V1H0z', 5, 6)}</button>`);
define('h-scroll', () => `<style>
:host{display:flex;height:16px;padding-left:1px}
button{width:16px;height:16px;display:grid;place-items:center;flex:none}
button.on{background:#e8e6e2;box-shadow:inset 1px 1px #404040,inset -1px -1px #fff}
.thumb{flex:1}.t{width:3px;background:#ece9e4}
</style><button class="raised" aria-label="Обычный режим">${ico('viewN')}</button><button class="raised" aria-label="Веб-документ">${ico('viewW')}</button><button class="on" aria-label="Режим разметки">${ico('viewP')}</button><button class="raised" aria-label="Режим структуры">${ico('viewO')}</button>
<button class="raised" aria-label="Влево">${arr('M3 0h1v7H3V6H2V5H1V4H0V3h1V2h1V1h1z', 4, 7)}</button><span class="thumb raised"></span><span class="t"></span><button class="raised" aria-label="Вправо">${arr('M0 0h1v1h1v1h1v1h1v1H3v1H2v1H1v1H0z', 4, 7)}</button>`);

/* ---------- status and task bars ---------- */
define('status-bar', () => `<style>
:host{display:flex;align-items:center;gap:5px;height:22px;padding:2px 5px 0;white-space:nowrap}
div{display:flex;align-items:center;height:18px;padding:0 2px;border:1px solid;border-color:#808080 #fff #fff #808080;flex:none;overflow:hidden}
.a{width:194px;padding-left:5px}.b{width:166px}
.a span:nth-child(1){width:66px}.a span:nth-child(2){width:76px}
.b span:nth-child(1){width:61px}.b span:nth-child(2){width:45px}
.off{color:#808080;text-shadow:1px 1px #fff;justify-content:center;padding:0}
span{white-space:pre}
</style><div class="a"><span>Стр.  56</span><span>Разд  1</span><span>55/73</span></div><div class="b"><span>На  2см</span><span>Ст  1</span><span>Кол  2</span></div>
<div class="off" style="width:26px">ЗАП</div><div class="off" style="width:33px">ИСПР</div><div class="off" style="width:26px">ВДЛ</div><div class="off" style="width:26px">ЗАМ</div>
<div style="width:65px;padding:0 0 0 1px">русский (Ро</div><div style="width:44px;justify-content:center">${ico('book')}</div><div style="width:35px"></div>`);
define('task-button', el => `<style>
:host{display:block;flex:0 1 157px;min-width:0}
button{display:flex;align-items:center;gap:3px;width:100%;height:22px;padding:0 4px;text-align:left}
span{flex:1;overflow:hidden;text-overflow:clip}
button.on{font-weight:bold;background:repeating-conic-gradient(#fff 0 25%,#d4d0c8 0 50%) 0 0/2px 2px;box-shadow:inset 1px 1px #404040,inset -1px -1px #fff,inset 2px 2px #808080}
</style><button type="button" class="${el.hasAttribute('on') ? 'on' : 'raised'}">${ico(el.getAttribute('icon'))}<span><slot></slot></span></button>`);
define('task-bar', () => `<style>
:host{display:flex;align-items:center;height:27px;padding:0 2px;border-top:1px solid #fff}
.start{display:flex;align-items:center;gap:2px;width:52px;height:22px;padding:0 3px;font-weight:bold;margin-right:4px;flex:none}
.tasks{display:flex;gap:3px;flex:0 1 797px;min-width:0}
.quick{display:flex;gap:7px;margin-left:9px;flex:1;min-width:0;overflow:hidden}
.quick button{flex:none}
.tray{display:flex;align-items:center;gap:3px;height:22px;padding:0 8px 0 4px;border:1px solid;border-color:#808080 #fff #fff #808080;flex:none}
.lang{background:#000080;color:#fff;width:16px;height:16px;line-height:16px;text-align:center}
.more{font-weight:bold}
time{margin-left:3px}
</style><button class="start raised">${ico('start')}Пуск</button>
<div class="tasks"><task-button icon="chrome">kadrovyi_print.png (959...</task-button><task-button icon="outlook">Входящие - Outlook Ex...</task-button><task-button icon="folder">0007 дип Делопроизво...</task-button><task-button icon="word">15972.rtf - Microsoft Word</task-button><task-button icon="word" on>Документирование ...</task-button></div>
<div class="quick">${['editNote', 'chrome', 'opera', 'wordSq', 'outlook', 'excelSq', 'eye', 'clap', 'tri', 'media', 'bolt', 'leg', 'leg', 'leg', 'robot', 'gsq', 'ie'].map(n => `<button type="button" aria-label="Быстрый запуск">${ico(n)}</button>`).join('')}</div>
<div class="tray"><span class="more">«</span>${ico('net')}${ico('kav')}${ico('env')}<span class="lang">Ru</span><time>23:54</time></div>`);

define('word-app', () => `<style>
:host{display:flex;flex-direction:column;height:100vh;min-height:400px;background:#d4d0c8}
.bars{display:flex;flex-direction:column}
.work{flex:1;min-height:0;display:flex;border:solid;border-width:2px 1px 1px 2px;border-color:#606060 #e8e6e2 #d4d0c8 #606060;margin-right:1px}
.main{flex:1;min-width:0;display:flex;flex-direction:column}
.view{flex:1;min-height:0;display:flex}
.dt{border-top:1px solid #fff;border-bottom:1px solid #808080;height:27px;flex:none}
title-bar,menu-bar,status-bar,task-bar,.bars{flex:none}
</style>
<title-bar></title-bar><menu-bar></menu-bar>
<div class="bars">
<tool-bar><tool-combo style="width:97px" label="Стиль" value="Основной текст"></tool-combo><tool-combo style="width:124px" label="Шрифт" value="Times New Roman"></tool-combo><tool-combo style="width:45px" label="Размер" value="14"></tool-combo>${SEP}
<tool-button glyph label="Полужирный">Ж</tool-button><tool-button glyph label="Курсив"><i>К</i></tool-button><tool-button glyph label="Подчеркнутый"><u>Ч</u></tool-button>${SEP}${B('alignL', 'По левому краю')}${B('alignC', 'По центру')}${B('alignR', 'По правому краю')}${B('alignJ', 'По ширине', 1)}${SEP}${B('numList', 'Нумерация')}${B('bulList', 'Маркеры')}${B('outdent', 'Уменьшить отступ')}${B('indent', 'Увеличить отступ')}${SEP}${B('border', 'Границы')}${A}${B('marker', 'Выделение')}${A}${B('fontColor', 'Цвет шрифта')}${A}${B('sp1', 'Одинарный')}${B('sp15', 'Полуторный', 1)}${B('sp2', 'Двойной')}${B('sup', 'Надстрочный')}${B('sub', 'Подстрочный')}${E}</tool-bar>
<tool-bar>${B('newDoc', 'Создать')}${B('open', 'Открыть')}${B('save', 'Сохранить')}${B('mail', 'Сообщение')}${SEP}${B('print', 'Печать')}${B('preview', 'Просмотр')}${B('spell', 'Правописание')}${SEP}${B('cut', 'Вырезать')}${B('copy', 'Копировать')}${B('paste', 'Вставить')}${B('brush', 'Формат по образцу')}${SEP}${B('undo', 'Отменить')}${A}${B('redo', 'Вернуть')}<tool-arrow dim></tool-arrow>${SEP}${B('link', 'Гиперссылка')}${B('tables', 'Таблицы и границы')}${B('table', 'Таблица')}${B('excel', 'Excel')}${B('cols', 'Колонки')}${B('draw', 'Рисование', 1)}${SEP}${B('docmap', 'Схема документа')}${B('para', 'Непечатаемые знаки')}<tool-combo style="width:55px" label="Масштаб" value="100%"></tool-combo>${B('help', 'Справка')}${E}</tool-bar>
<tool-bar>${B('back', 'Назад')}${B('fwd', 'Вперед')}${SEP}${B('stop', 'Остановить')}${B('refresh', 'Обновить')}${SEP}${B('home', 'Домой')}${B('search', 'Поиск')}<tool-button text label="Избранное">Избранное</tool-button>${SEP}<tool-button text label="Переход">Пере<u>х</u>од</tool-button>${SEP}${B('barsTop', 'Панели')}${SEP}<tool-combo style="width:270px" label="Адрес" value="C:\\Documents and Settings\\Ирина\\Мои документы"></tool-combo>${E}</tool-bar>
</div>
<div class="work"><div class="main"><h-ruler></h-ruler><div class="view"><v-ruler></v-ruler><doc-canvas></doc-canvas></div><h-scroll></h-scroll></div><v-scroll></v-scroll></div>
<div class="dt"><tool-bar style="height:25px;width:fit-content"><tool-button text label="Действия">Де<u>й</u>ствия</tool-button>${B('pick', 'Выбор объектов')}${B('rotate', 'Свободное вращение')}${SEP}<tool-button text label="Автофигуры">Автофи<u>г</u>уры</tool-button>${B('line', 'Линия')}${B('arrow', 'Стрелка')}${B('rect', 'Прямоугольник')}${B('oval', 'Овал')}${B('textbox', 'Надпись')}${B('wordart', 'WordArt')}${B('clip', 'Картинка')}${SEP}${B('fill', 'Цвет заливки')}${A}${B('pen', 'Цвет линий')}${A}${B('fontColor', 'Цвет шрифта')}${A}${B('weights', 'Тип линии')}${B('dashes', 'Тип штриха')}${B('arrows', 'Вид стрелки')}${B('shadow', 'Тень')}${B('cube', 'Объем')}${E}</tool-bar></div>
<status-bar></status-bar><task-bar></task-bar>`);
</script>
</body>
</html>
